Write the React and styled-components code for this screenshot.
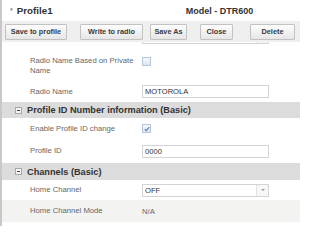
import React from "react";
import styled, { createGlobalStyle } from "styled-components";

const Global = createGlobalStyle`
  html, body { margin: 0; padding: 0; background: #fff; }
  body { font-family: "Liberation Sans", Arial, sans-serif; }
`;

const Frame = styled.div`
  width: 298px;
  height: 226px;
  border-left: 2px solid #c8c8c8;
  overflow: hidden;
  background: #fff;
  display: flex;
  flex-direction: column;
`;

const Header = styled.div`
  height: 21px;
  flex: none;
  display: flex;
  align-items: center;
  padding-left: 8px;
  font-weight: bold;
  color: #333;
`;

const Star = styled.span`
  color: #888;
  font-size: 7px;
  margin-right: 4px;
`;

const Title = styled.span`
  width: 169px;
  font-size: 9.8px;
`;

const Model = styled.span`
  font-size: 9px;
`;

const Toolbar = styled.div`
  height: 21px;
  flex: none;
  background: #efefef;
  display: flex;
  align-items: center;
  padding-left: 3px;
`;

const Button = styled.button`
  height: 16px;
  width: ${(p) => p.w}px;
  margin-right: ${(p) => p.mr}px;
  padding: 0;
  flex: none;
  font-family: "Liberation Sans", Arial, sans-serif;
  font-size: 7.3px;
  font-weight: bold;
  color: #3a3a3a;
  border: 1px solid #c2c2c2;
  border-radius: 1px;
  background: linear-gradient(#fdfdfd, #e6e6e6);
`;

const Viewport = styled.div`
  flex: 1;
  overflow: hidden;
`;

const Content = styled.div`
  margin-top: -15px;
  display: flex;
  flex-direction: column;
`;

const Row = styled.div`
  display: flex;
  align-items: ${(p) => (p.top ? "flex-start" : "center")};
  padding-top: ${(p) => p.pt || 0}px;
  box-sizing: border-box;
  height: ${(p) => p.h}px;
  background: ${(p) => (p.shade ? "#f3f3f1" : "#fff")};
`;

const Label = styled.div`
  width: 140px;
  flex: none;
  box-sizing: border-box;
  padding-left: 28px;
  padding-right: 6px;
  font-size: 7.7px;
  line-height: 10px;
  color: #666;
`;

const Value = styled.div`
  font-size: 7.7px;
  color: #666;
`;

const Input = styled.div`
  width: 127px;
  height: 13px;
  border: 1px solid #d4d4d4;
  box-sizing: border-box;
  display: flex;
  align-items: center;
  padding-left: 2px;
  font-size: 7.6px;
  color: #333;
  position: relative;
  background: #fff;
`;

const Arrow = styled.div`
  position: absolute;
  right: 0;
  top: 0;
  bottom: 0;
  width: 11px;
  border-left: 1px solid #e2e2e2;
  background: #f7f7f7;
  display: flex;
  align-items: center;
  justify-content: center;
  &::after {
    content: "";
    border-left: 2px solid transparent;
    border-right: 2px solid transparent;
    border-top: 2px solid #9a9a9a;
  }
`;

const Check = styled.div`
  width: 9px;
  height: 9px;
  margin-top: ${(p) => p.mt || 0}px;
  box-sizing: border-box;
  border: 1px solid #b7c6d7;
  background: linear-gradient(#f7f9fc, #dde6f0);
  display: flex;
  align-items: center;
  justify-content: center;
`;

const Section = styled.div`
  height: ${(p) => p.h}px;
  flex: none;
  background: #dcdcdc;
  display: flex;
  align-items: center;
  padding-left: 13px;
  font-weight: bold;
  font-size: 9.2px;
  color: #333;
`;

const Minus = styled.div`
  width: 7px;
  height: 7px;
  box-sizing: border-box;
  border: 1px solid #a8a8a8;
  background: #f4f4f4;
  margin-right: 5px;
  display: flex;
  align-items: center;
  justify-content: center;
  &::after {
    content: "";
    width: 3px;
    height: 1px;
    background: #444;
  }
`;

export default function App() {
  return (
    <>
      <Global />
      <Frame>
        <Header>
          <Star>*</Star>
          <Title>Profile1</Title>
          <Model>Model - DTR600</Model>
        </Header>
        <Toolbar>
          <Button w={62} mr={13}>Save to profile</Button>
          <Button w={63} mr={7}>Write to radio</Button>
          <Button w={37} mr={13}>Save As</Button>
          <Button w={33} mr={17}>Close</Button>
          <Button w={45} mr={0}>Delete</Button>
        </Toolbar>
        <Viewport>
          <Content>
            <Row h={21}>
              <Label />
              <Input>
                <Arrow />
              </Input>
            </Row>
            <Row h={33} top pt={8}>
              <Label>Radio Name Based on Private Name</Label>
              <Check mt={1} />
            </Row>
            <Row h={21}>
              <Label>Radio Name</Label>
              <Input>MOTOROLA</Input>
            </Row>
            <Section h={16}>
              <Minus />
              Profile ID Number information (Basic)
            </Section>
            <Row h={21}>
              <Label>Enable Profile ID change</Label>
              <Check>
                <svg width="6" height="6" viewBox="0 0 6 6">
                  <path d="M0.8 3.1 L2.3 4.6 L5.3 1.2" fill="none" stroke="#4f86bd" strokeWidth="1.2" />
                </svg>
              </Check>
            </Row>
            <Row h={24}>
              <Label>Profile ID</Label>
              <Input>0000</Input>
            </Row>
            <Section h={17}>
              <Minus />
              Channels (Basic)
            </Section>
            <Row h={20}>
              <Label>Home Channel</Label>
              <Input>
                OFF
                <Arrow />
              </Input>
            </Row>
            <Row h={22} shade>
              <Label>Home Channel Mode</Label>
              <Value>N/A</Value>
            </Row>
          </Content>
        </Viewport>
      </Frame>
    </>
  );
}
